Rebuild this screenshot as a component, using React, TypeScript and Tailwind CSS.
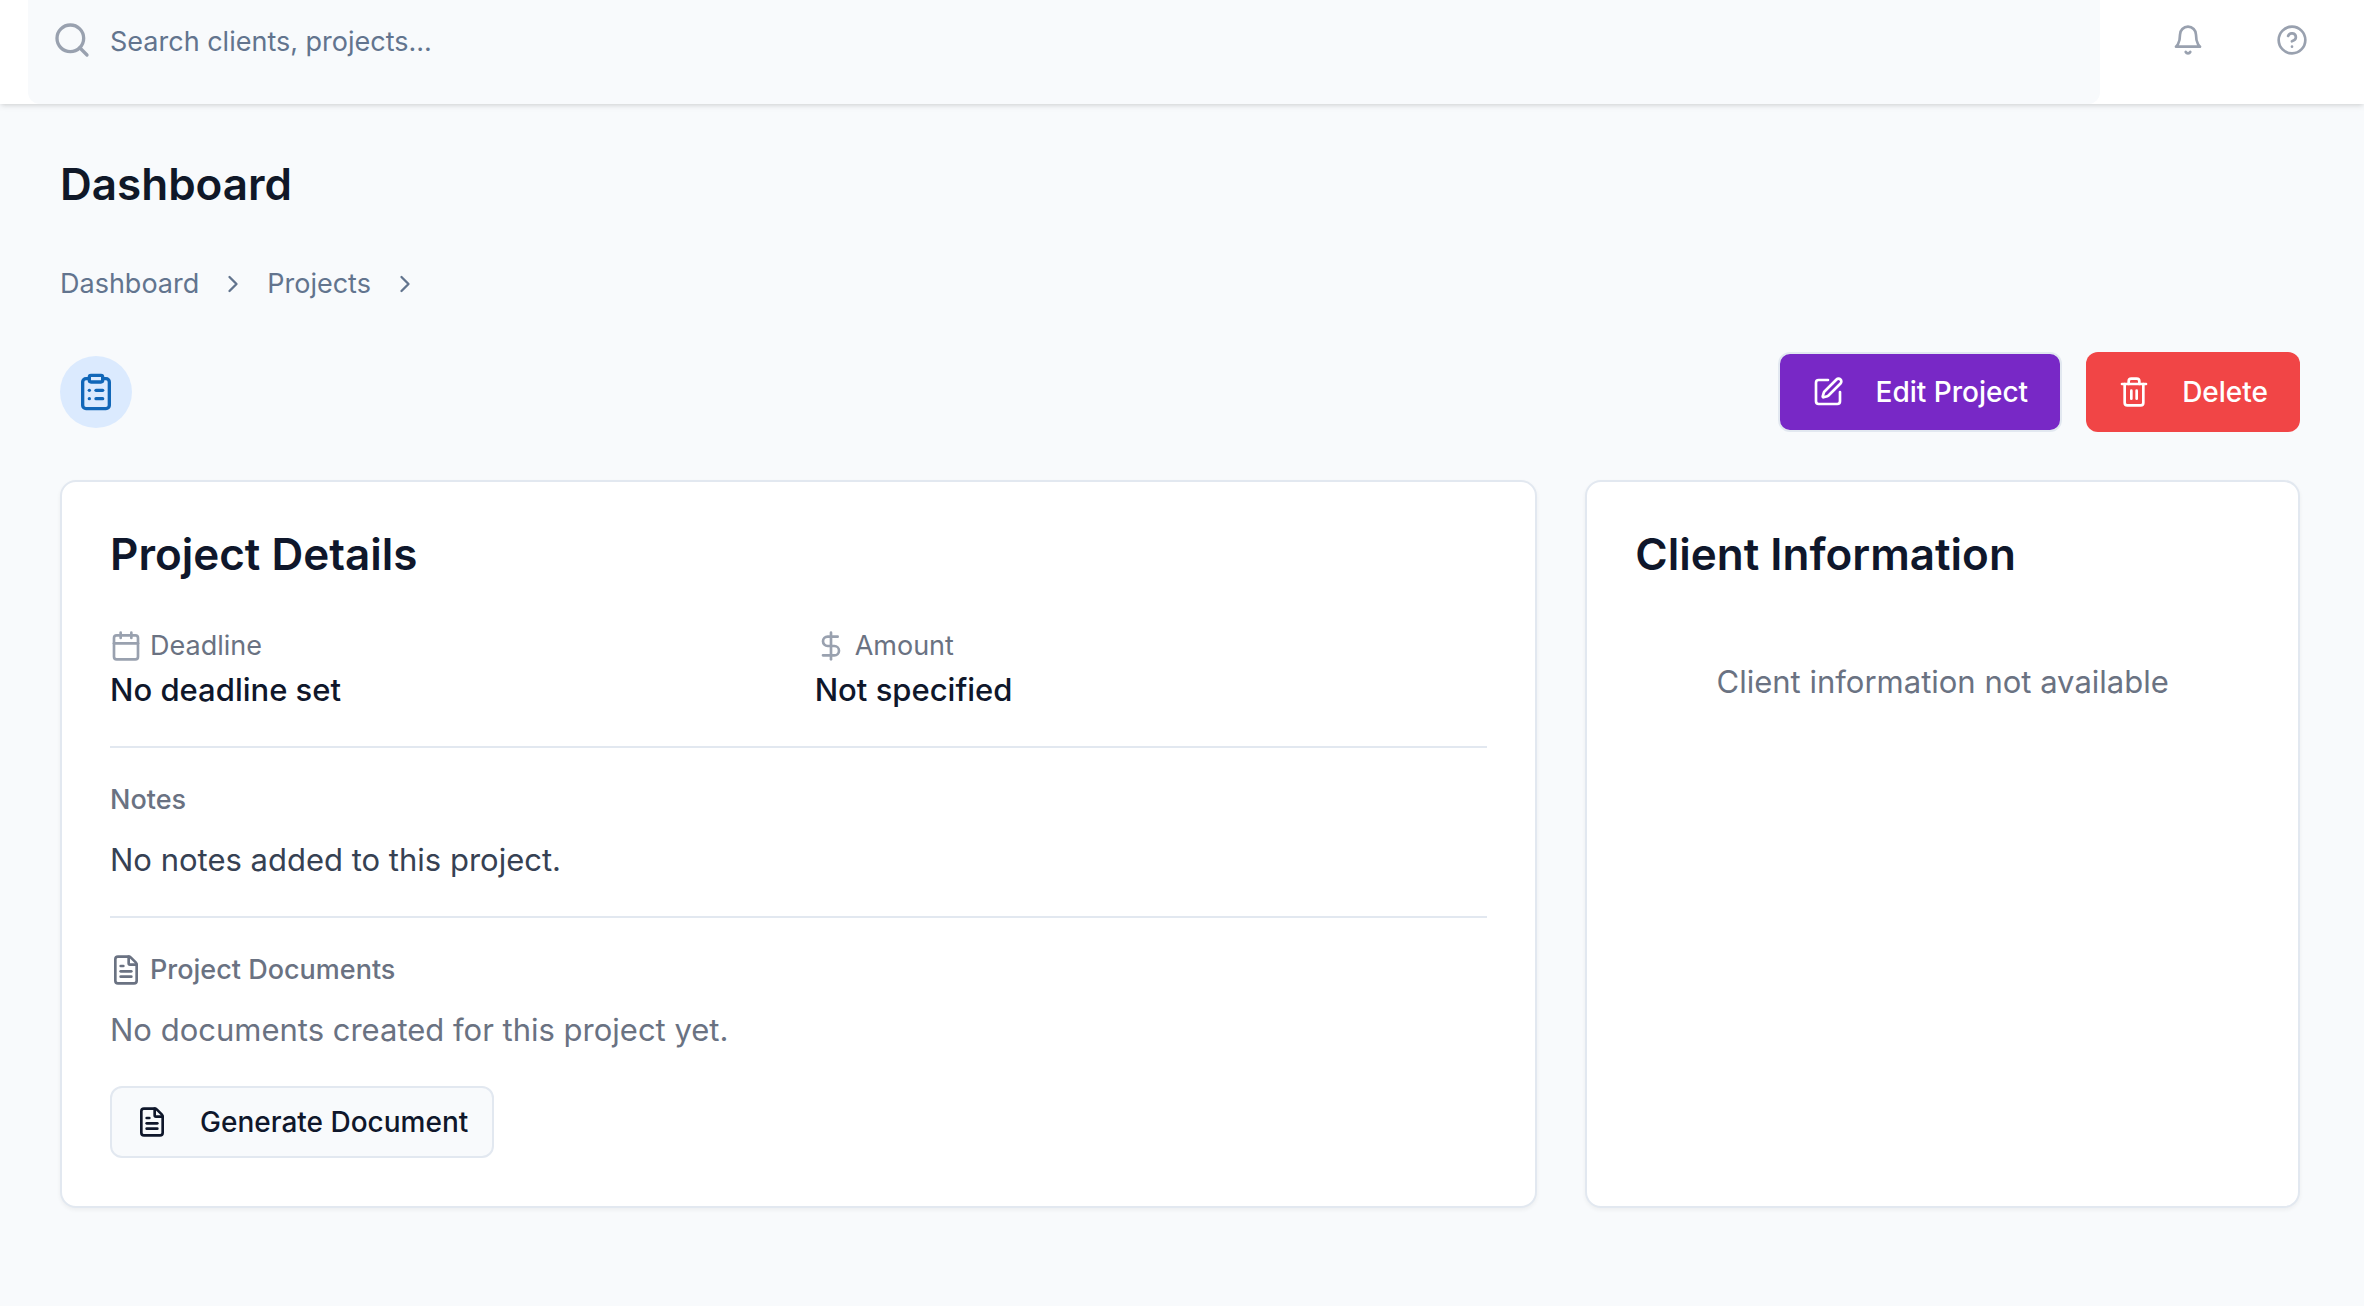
import type { ReactNode } from "react";
import {
  Calendar,
  ChevronRight,
  ClipboardList,
  DollarSign,
  FileText,
  Search,
  SquarePen,
  Trash2,
} from "lucide-react";

function BellIcon() {
  return (
    <svg className="size-8" viewBox="0 0 24 24" fill="none" stroke="currentColor" strokeWidth="2" strokeLinecap="round" strokeLinejoin="round" aria-hidden="true">
      <path d="M6 8a6 6 0 0 1 12 0c0 7 3 9 3 9H3s3-2 3-9" />
      <path d="M10.3 21a1.94 1.94 0 0 0 3.4 0" />
    </svg>
  );
}

function HelpIcon() {
  return (
    <svg className="size-8" viewBox="0 0 24 24" fill="none" stroke="currentColor" strokeWidth="2" strokeLinecap="round" strokeLinejoin="round" aria-hidden="true">
      <circle cx="12" cy="12" r="10" />
      <path d="M9.09 9a3 3 0 0 1 5.83 1c0 2-3 3-3 3" />
      <path d="M12 17h.01" />
    </svg>
  );
}

function TopBar() {
  return (
    <header className="relative flex bg-white pl-7 shadow-[0_2px_6px_rgba(0,0,0,0.1),0_2px_4px_-2px_rgba(0,0,0,0.1)]">
      <label className="flex h-26 flex-1 items-start gap-[18px] rounded-b-xl bg-slate-50 px-6 pt-5">
        <Search className="size-10 shrink-0 text-gray-400" />
        <input
          type="text"
          aria-label="Search clients, projects"
          placeholder="Search clients, projects..."
          className="h-11 min-w-0 flex-1 bg-transparent text-[27px] leading-11 text-slate-900 outline-none placeholder:text-slate-500"
        />
      </label>
      <div className="flex items-start gap-10 pt-2 pr-10 pl-14 text-gray-400">
        <button type="button" aria-label="Notifications" className="flex size-16 items-center justify-center">
          <BellIcon />
        </button>
        <button type="button" aria-label="Help" className="flex size-16 items-center justify-center">
          <HelpIcon />
        </button>
      </div>
    </header>
  );
}

function Card({ title, className, children }: { title: string; className?: string; children: ReactNode }) {
  return (
    <section className={`rounded-2xl border-2 border-slate-200 bg-white p-12 shadow-[0_2px_4px_rgba(0,0,0,0.05)] ${className ?? ""}`}>
      <h2 className="mb-12 text-[44px] leading-12 font-semibold text-slate-900">{title}</h2>
      {children}
    </section>
  );
}

function Field({ icon, label, value }: { icon: ReactNode; label: string; value: string }) {
  return (
    <div>
      <dt className="flex items-center gap-2 text-[27px] leading-10 text-gray-500">
        <span className="text-gray-400">{icon}</span>
        {label}
      </dt>
      <dd className="text-[31px] leading-12 font-medium text-slate-900">{value}</dd>
    </div>
  );
}

export default function App() {
  return (
    <div className="min-h-screen bg-slate-50 font-['Inter',sans-serif]">
      <TopBar />
      <main className="px-15 pt-12 pr-16 pb-24">
        <h1 className="text-[44px] leading-16 font-semibold text-gray-900">Dashboard</h1>

        <nav aria-label="Breadcrumb" className="mt-12 flex items-center gap-5 text-[27px] leading-10 text-slate-500">
          <a href="#dashboard">Dashboard</a>
          <ChevronRight className="size-7" />
          <a href="#projects">Projects</a>
          <ChevronRight className="size-7" />
        </nav>

        <div className="mt-12 flex items-center justify-between">
          <div className="flex size-18 items-center justify-center rounded-full bg-blue-100 text-[#1167b8]">
            <ClipboardList className="size-10" />
          </div>
          <div className="flex gap-6 text-[28px] leading-10 font-medium text-white">
            <button type="button" className="flex h-20 items-center gap-8 rounded-xl border-2 border-slate-200 bg-[#7828c6] px-8">
              <SquarePen className="size-8" />
              Edit Project
            </button>
            <button type="button" className="flex h-20 items-center gap-8 rounded-xl bg-[#f14546] px-8">
              <Trash2 className="size-8" />
              Delete
            </button>
          </div>
        </div>

        <div className="mt-12 grid grid-cols-3 gap-12">
          <Card title="Project Details" className="col-span-2">
            <dl className="grid grid-cols-2 gap-8">
              <Field icon={<Calendar className="size-8" />} label="Deadline" value="No deadline set" />
              <Field icon={<DollarSign className="size-8" />} label="Amount" value="Not specified" />
            </dl>

            <div className="mt-8 border-t-2 border-slate-200 pt-8">
              <h3 className="text-[27px] leading-10 font-medium text-gray-500">Notes</h3>
              <p className="mt-4 text-[31px] leading-12 text-gray-700">No notes added to this project.</p>
            </div>

            <div className="mt-8 border-t-2 border-slate-200 pt-8">
              <h3 className="flex items-center gap-2 text-[27px] leading-10 font-medium text-gray-500">
                <FileText className="size-8" />
                Project Documents
              </h3>
              <p className="mt-4 text-[31px] leading-12 text-gray-500">No documents created for this project yet.</p>
              <button
                type="button"
                className="mt-8 flex h-18 items-center gap-8 rounded-xl border-2 border-slate-200 bg-slate-50 px-6 text-[28px] leading-10 font-medium text-slate-900"
              >
                <FileText className="size-8" />
                Generate Document
              </button>
            </div>
          </Card>

          <Card title="Client Information">
            <p className="py-8 text-center text-[31px] leading-12 text-gray-500">Client information not available</p>
          </Card>
        </div>
      </main>
    </div>
  );
}
